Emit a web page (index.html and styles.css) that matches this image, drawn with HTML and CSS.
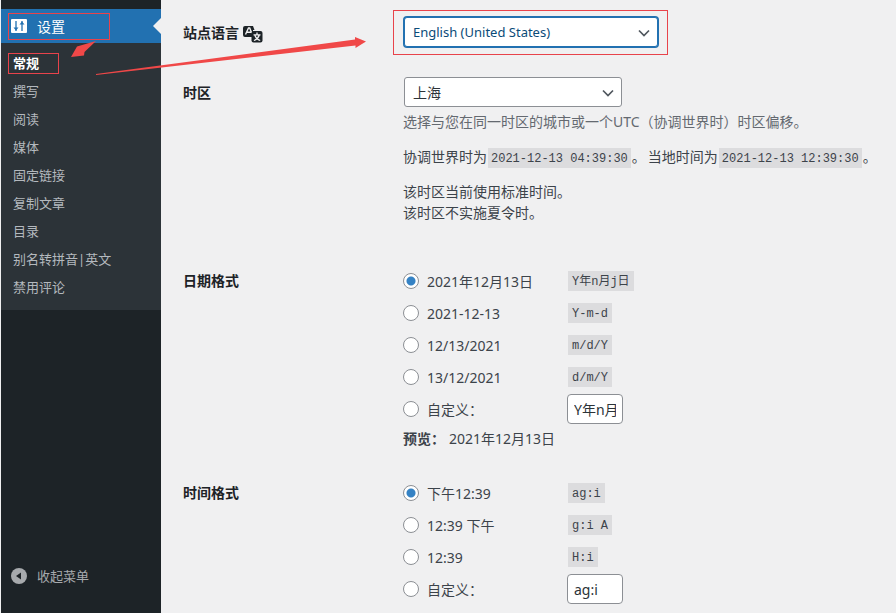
FILE: index.html
```html
<!DOCTYPE html>
<html lang="zh-CN">
<head>
  <meta charset="UTF-8">
  <meta name="viewport" content="width=device-width, initial-scale=1.0">
  <title>常规选项</title>
  <link rel="stylesheet" href="styles.css">
</head>
<body>
  <nav class="menu">
    <a class="menu-top" href="#">
      <svg class="menu-icon" width="16" height="16" viewBox="0 0 16 16">
        <rect y="1" width="16" height="14" rx="1" fill="#fff"/>
        <path d="M5 3v10M11 3v10" stroke="#2271b1" stroke-width="1.300"/>
        <path d="M2.500 9.500h5L5 12.500zM8.500 6.500h5L11 3.500z" fill="#2271b1"/>
      </svg>
      <span>设置</span>
    </a>
    <ul class="submenu">
      <li><a class="current" href="#">常规</a></li>
      <li><a href="#">撰写</a></li>
      <li><a href="#">阅读</a></li>
      <li><a href="#">媒体</a></li>
      <li><a href="#">固定链接</a></li>
      <li><a href="#">复制文章</a></li>
      <li><a href="#">目录</a></li>
      <li><a href="#">别名转拼音|英文</a></li>
      <li><a href="#">禁用评论</a></li>
    </ul>
    <button class="collapse" type="button">
      <svg class="menu-icon" width="16" height="16" viewBox="0 0 16 16">
        <circle cx="8" cy="8" r="8" fill="#a7aaad"/>
        <path d="M10 4.500v7L5 8z" fill="#1d2327"/>
      </svg>
      <span>收起菜单</span>
    </button>
  </nav>

  <form class="settings">
    <div class="row">
      <label class="row-title" for="language">站点语言
        <svg class="lang-icon" width="20" height="17" viewBox="0 0 20 17">
          <path d="M2 0h8l1.500 4H10v7H2a2 2 0 0 1-2-2V2a2 2 0 0 1 2-2z" fill="#1d2327"/>
          <path d="M2.500 8.500L5.500 2h1.200l2 5M4 6.300h4" fill="none" stroke="#f0f0f1" stroke-width="1.400"/>
          <rect x="8.500" y="5" width="11" height="11.500" rx="2" fill="#1d2327"/>
          <path d="M14 6.500v2M10.500 8.800h7M16.300 9c-.8 2.600-2.800 4.500-5.400 5.500M11.800 9c.8 2.600 2.800 4.500 5.400 5.500" fill="none" stroke="#f0f0f1" stroke-width="1.300"/>
        </svg>
      </label>
      <div class="field">
        <div class="select language">
          <select id="language">
            <option>English (United States)</option>
          </select>
          <svg class="chevron" width="12" height="8" viewBox="0 0 12 8"><path d="M1 1.500l5 5 5-5" fill="none" stroke="#50575e" stroke-width="1.700"/></svg>
        </div>
      </div>
    </div>

    <div class="row">
      <label class="row-title" for="timezone">时区</label>
      <div class="field">
        <div class="select timezone">
          <select id="timezone">
            <option>上海</option>
          </select>
          <svg class="chevron" width="12" height="8" viewBox="0 0 12 8"><path d="M1 1.500l5 5 5-5" fill="none" stroke="#50575e" stroke-width="1.700"/></svg>
        </div>
        <p class="description">选择与您在同一时区的城市或一个UTC（协调世界时）时区偏移。</p>
        <p class="times">
          <span>协调世界时为<code>2021-12-13 04:39:30</code>。</span>
          <span>当地时间为<code>2021-12-13 12:39:30</code>。</span>
        </p>
        <p>该时区当前使用标准时间。<br>该时区不实施夏令时。</p>
      </div>
    </div>

    <div class="row formats" role="radiogroup" aria-labelledby="date-title">
      <div class="row-title" id="date-title">日期格式</div>
      <div class="field">
        <div class="option"><label><input type="radio" name="date" checked>2021年12月13日</label><code>Y年n月j日</code></div>
        <div class="option"><label><input type="radio" name="date">2021-12-13</label><code>Y-m-d</code></div>
        <div class="option"><label><input type="radio" name="date">12/13/2021</label><code>m/d/Y</code></div>
        <div class="option"><label><input type="radio" name="date">13/12/2021</label><code>d/m/Y</code></div>
        <div class="option custom"><label><input type="radio" name="date">自定义：</label><input class="small-text" type="text" value="Y年n月j日" aria-label="自定义日期格式"></div>
        <p class="preview"><strong>预览：</strong><span>2021年12月13日</span></p>
      </div>
    </div>

    <div class="row formats" role="radiogroup" aria-labelledby="time-title">
      <div class="row-title" id="time-title">时间格式</div>
      <div class="field">
        <div class="option"><label><input type="radio" name="time" checked>下午12:39</label><code>ag:i</code></div>
        <div class="option"><label><input type="radio" name="time">12:39 下午</label><code>g:i A</code></div>
        <div class="option"><label><input type="radio" name="time">12:39</label><code>H:i</code></div>
        <div class="option custom"><label><input type="radio" name="time">自定义：</label><input class="small-text" type="text" value="ag:i" aria-label="自定义时间格式"></div>
      </div>
    </div>
  </form>

  <!-- red frames and arrows over the page -->
  <svg class="marks" width="680" height="90" viewBox="0 0 680 90" aria-hidden="true">
    <g fill="none" stroke="#e8434b">
      <rect x="8.500" y="13.500" width="101" height="26"/>
      <rect x="8.500" y="53.500" width="50" height="20"/>
      <rect x="393.500" y="10.500" width="274" height="44"/>
    </g>
    <g fill="#f04848">
      <path d="M96 41L77 46.500 71 57 84 55.500 84.500 52z"/>
      <path d="M96 74L355 39.500V37L366 41.500 355.500 48V45.500L96 75z"/>
    </g>
  </svg>
</body>
</html>
```
FILE: styles.css
```css
* {
  box-sizing: border-box;
}
body {
  margin: 0;
  padding-left: 1px;
  display: flex;
  min-height: 100vh;
  overflow-x: hidden;
  background: #f0f0f1;
  color: #3c434a;
  font-family: "Noto Sans", "Noto Sans CJK SC", sans-serif;
  font-size: 14px;
  line-height: 21px;
}
p {
  margin: 0;
}

/* left menu */
.menu {
  flex: 0 0 160px;
  padding-top: 9px;
  background: #1d2327;
  font-size: 13px;
}
.menu a {
  text-decoration: none;
}
.menu-top {
  position: relative;
  display: flex;
  align-items: center;
  gap: 10px;
  height: 34px;
  padding-left: 10px;
  background: #2271b1;
  color: #fff;
  font-size: 14px;
}
.menu-top::after {
  content: "";
  position: absolute;
  right: 0;
  top: 9px;
  border: 8px solid transparent;
  border-left: 0;
  border-right-color: #f0f0f1;
}
.submenu {
  margin: 0;
  padding: 6px 0 9px;
  list-style: none;
  background: #2c3338;
}
.submenu a {
  display: block;
  padding-left: 12px;
  line-height: 28px;
  color: #b4b9be;
}
.submenu .current {
  color: #fff;
  font-weight: 700;
}
.collapse {
  display: flex;
  align-items: center;
  gap: 10px;
  width: 100%;
  height: 34px;
  margin-top: 249px;
  padding: 0 0 0 10px;
  border: 0;
  background: none;
  color: #a7aaad;
  font: inherit;
}

/* settings form */
.settings {
  flex: 1;
  min-width: 0;
  padding: 2px 0 0 22px;
}
.row {
  display: grid;
  grid-template-columns: 220px 1fr;
  padding: 15px 0;
}
.row-title {
  padding-top: 5px;
  color: #1d2327;
  font-weight: 700;
}
.lang-icon {
  vertical-align: -5px;
}
.field {
  white-space: nowrap;
}
.select {
  position: relative;
  height: 30px;
  margin-left: 1px;
}
.select select {
  width: 100%;
  height: 30px;
  padding: 0 24px 0 8px;
  appearance: none;
  border: 1px solid #8c8f94;
  border-radius: 3px;
  background: #fff;
  color: #2c3338;
  font: inherit;
}
.language {
  width: 254px;
}
.language select {
  border-color: #2271b1;
  box-shadow: 0 0 0 1px #2271b1;
  color: #0a4b78;
  font-size: 13px;
}
.timezone {
  width: 218px;
}
.chevron {
  position: absolute;
  right: 8px;
  top: 12px;
  pointer-events: none;
}
.description {
  margin-top: 4px;
  color: #646970;
}
.times {
  display: flex;
  gap: 2px;
  height: 21px;
  margin: 14px 0;
}
code {
  display: inline-block;
  height: 20px;
  margin: 0 1px;
  padding: 3px 4px 0;
  background: #dcdcde;
  font-family: "Liberation Mono", "Noto Sans CJK SC", monospace;
  font-size: 12px;
  line-height: 17px;
}
.times code {
  padding: 3px 3px 0;
}

/* date and time formats */
.formats {
  padding: 32px 0 1px;
}
.formats .row-title {
  padding-top: 0;
}
.option {
  display: grid;
  grid-template-columns: 164px auto;
  align-items: center;
  justify-content: start;
  height: 32px;
}
.formats .field {
  margin-top: -5px;
}
.option label {
  display: flex;
  align-items: center;
  gap: 8px;
}
.option input[type="radio"] {
  width: 16px;
  height: 16px;
  margin: 0;
  appearance: none;
  border: 1px solid #8c8f94;
  border-radius: 50%;
  background: #fff;
}
.option input[type="radio"]:checked {
  background: radial-gradient(circle, #3582c4 4px, #fff 5px);
}
.small-text {
  width: 56px;
  height: 30px;
  padding: 0 6px;
  border: 1px solid #8c8f94;
  border-radius: 4px;
  background: #fff;
  color: #2c3338;
  font: inherit;
}
.preview {
  display: flex;
  gap: 4px;
  margin-top: 3px;
}

.marks {
  position: absolute;
  left: 0;
  top: 0;
  pointer-events: none;
}
```
